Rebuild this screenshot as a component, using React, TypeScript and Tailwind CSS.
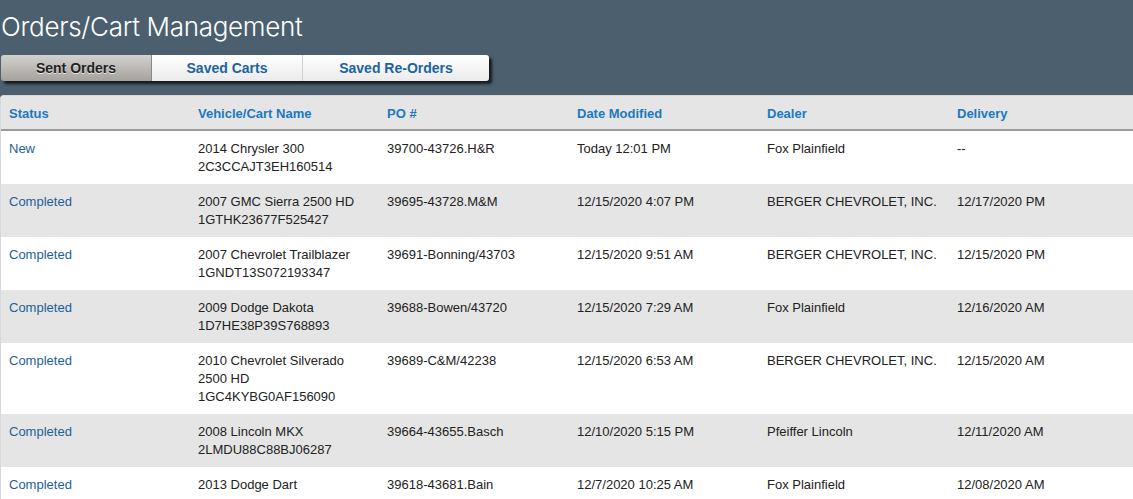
import React from "react";

type Order = {
  status: string;
  vehicle: string[];
  po: string;
  date: string;
  dealer: string;
  delivery: string;
};

const orders: Order[] = [
  { status: "New", vehicle: ["2014 Chrysler 300", "2C3CCAJT3EH160514"], po: "39700-43726.H&R", date: "Today 12:01 PM", dealer: "Fox Plainfield", delivery: "--" },
  { status: "Completed", vehicle: ["2007 GMC Sierra 2500 HD", "1GTHK23677F525427"], po: "39695-43728.M&M", date: "12/15/2020 4:07 PM", dealer: "BERGER CHEVROLET, INC.", delivery: "12/17/2020 PM" },
  { status: "Completed", vehicle: ["2007 Chevrolet Trailblazer", "1GNDT13S072193347"], po: "39691-Bonning/43703", date: "12/15/2020 9:51 AM", dealer: "BERGER CHEVROLET, INC.", delivery: "12/15/2020 PM" },
  { status: "Completed", vehicle: ["2009 Dodge Dakota", "1D7HE38P39S768893"], po: "39688-Bowen/43720", date: "12/15/2020 7:29 AM", dealer: "Fox Plainfield", delivery: "12/16/2020 AM" },
  { status: "Completed", vehicle: ["2010 Chevrolet Silverado", "2500 HD", "1GC4KYBG0AF156090"], po: "39689-C&M/42238", date: "12/15/2020 6:53 AM", dealer: "BERGER CHEVROLET, INC.", delivery: "12/15/2020 AM" },
  { status: "Completed", vehicle: ["2008 Lincoln MKX", "2LMDU88C88BJ06287"], po: "39664-43655.Basch", date: "12/10/2020 5:15 PM", dealer: "Pfeiffer Lincoln", delivery: "12/11/2020 AM" },
  { status: "Completed", vehicle: ["2013 Dodge Dart"], po: "39618-43681.Bain", date: "12/7/2020 10:25 AM", dealer: "Fox Plainfield", delivery: "12/08/2020 AM" },
];

const columns = ["Status", "Vehicle/Cart Name", "PO #", "Date Modified", "Dealer", "Delivery"];

export default function App() {
  return (
    <div className="h-[499px] overflow-hidden bg-[#4b5f6f] font-['Liberation_Sans',Arial,sans-serif]">
      {/* Title */}
      <div className="pl-[1px] pt-[10px] h-[55px]">
        <h1 className="text-[26px] leading-[33px] text-white font-['Inter','Liberation_Sans',sans-serif] font-light tracking-[-0.3px]">
          Orders/Cart Management
        </h1>
      </div>

      {/* Tabs */}
      <div className="pl-[1px] h-[40px]">
        <div className="flex w-[488px] h-[26px] rounded-[3px] shadow-[3px_3px_3px_rgba(0,0,0,0.75)]">
          <button className="w-[151px] h-full rounded-l-[3px] bg-gradient-to-b from-[#d3d1cf] to-[#a5a19d] border-r border-[#8a8784] text-[14px] font-bold text-[#222] [text-shadow:0_1px_0_rgba(255,255,255,0.7)]">
            Sent Orders
          </button>
          <button className="w-[151px] h-full bg-gradient-to-b from-white to-[#ebebeb] border-r border-[#cfcfcf] text-[14px] font-bold text-[#1c63a0]">
            Saved Carts
          </button>
          <button className="flex-1 h-full rounded-r-[3px] bg-gradient-to-b from-white to-[#ebebeb] text-[14px] font-bold text-[#1c63a0]">
            Saved Re-Orders
          </button>
        </div>
      </div>

      {/* Table */}
      <div className="bg-white rounded-tl-[4px] border-t border-l border-[#d5d9dc] overflow-hidden">
        <table className="w-full table-fixed border-collapse text-[13px] text-[#222]">
          <colgroup>
            <col className="w-[189px]" />
            <col className="w-[189px]" />
            <col className="w-[190px]" />
            <col className="w-[190px]" />
            <col className="w-[190px]" />
            <col />
          </colgroup>
          <thead>
            <tr className="bg-[#e5e5e5] h-[34px] border-b-2 border-[#9a9a9a]">
              {columns.map((c) => (
                <th key={c} className="text-left font-bold text-[#1b78c2] pl-[8px] pt-[2px] align-middle">
                  {c}
                </th>
              ))}
            </tr>
          </thead>
          <tbody>
            {orders.map((o, i) => (
              <tr key={o.po} className={i % 2 === 1 ? "bg-[#e5e5e5]" : "bg-white"}>
                <td className="pl-[8px] pt-[9px] pb-[8px] align-top leading-[18px] text-[#1d5f97]">{o.status}</td>
                <td className="pl-[8px] pt-[9px] pb-[8px] align-top leading-[18px]">
                  {o.vehicle.map((v) => (
                    <div key={v}>{v}</div>
                  ))}
                </td>
                <td className="pl-[8px] pt-[9px] pb-[8px] align-top leading-[18px]">{o.po}</td>
                <td className="pl-[8px] pt-[9px] pb-[8px] align-top leading-[18px]">{o.date}</td>
                <td className="pl-[8px] pt-[9px] pb-[8px] align-top leading-[18px]">{o.dealer}</td>
                <td className="pl-[8px] pt-[9px] pb-[8px] align-top leading-[18px]">{o.delivery}</td>
              </tr>
            ))}
          </tbody>
        </table>
      </div>
    </div>
  );
}
